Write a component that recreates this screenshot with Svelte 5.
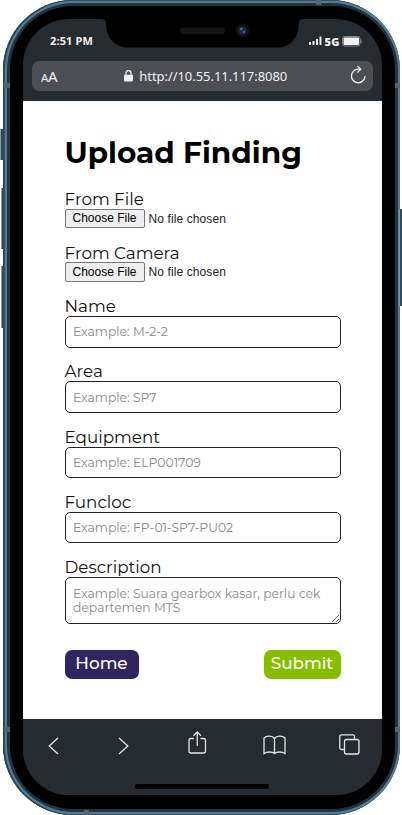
<script>
  const fields = [
    { id: 'name', label: 'Name', hint: 'Example: M-2-2' },
    { id: 'area', label: 'Area', hint: 'Example: SP7' },
    { id: 'equipment', label: 'Equipment', hint: 'Example: ELP001709' },
    { id: 'funcloc', label: 'Funcloc', hint: 'Example: FP-01-SP7-PU02' }
  ];
</script>

<div class="stage">
  <i class="key mute"></i><i class="key up"></i><i class="key down"></i><i class="key power"></i>
  <div class="phone">
    <div class="bezel">
      <div class="screen">
        <header>
          <div class="status">
            <span class="time">2:51 PM</span>
            <span class="signal">
              <svg width="14" height="10" viewBox="0 0 14 10" fill="#eee"><path d="M0 6h2v3H0zM3.5 5h2v4h-2zM7 3h2v6H7zM10.500 .5h2V9h-2z" /></svg>
              <b>5G</b>
              <svg class="battery" width="20" height="11" viewBox="0 0 20 11"><rect x=".5" y=".5" width="17.500" height="9.500" rx="2.200" fill="none" stroke="#85888b" /><rect x="1.500" y="1.500" width="15.500" height="7.500" rx="1" fill="#f2f2f2" /><path d="M19 3.500v3.500" stroke="#999" /></svg>
            </span>
          </div>
          <div class="address">
            <span class="aa"><small>A</small>A</span>
            <span class="url">
              <svg width="9" height="12" viewBox="0 0 9 12"><rect y="4.800" width="9" height="6.700" rx="1" fill="#eee" /><path d="M2 5V3a2.500 2.500 0 0 1 5 0v2" fill="none" stroke="#eee" stroke-width="1.300" /></svg>
              http://10.55.11.117:8080
            </span>
            <svg class="reload" width="17" height="19" viewBox="0 0 17 19" fill="none" stroke="#eee" stroke-width="1.300"><path d="M10.500 4.200H8.200A6.800 6.800 0 1 0 15 11M7.300 .9L10.700 4.200L7.300 7.500" /></svg>
          </div>
        </header>

        <main>
          <h1>Upload Finding</h1>
          <div class="file"><label for="file">From File</label><input id="file" type="file" /></div>
          <div class="file"><label for="camera">From Camera</label><input id="camera" type="file" /></div>
          {#each fields as field}
            <div class="field">
              <label for={field.id}>{field.label}</label>
              <input id={field.id} type="text" placeholder={field.hint} />
            </div>
          {/each}
          <div class="field description">
            <label for="description">Description</label>
            <textarea id="description" placeholder="Example: Suara gearbox kasar, perlu cek departemen MTS"></textarea>
          </div>
          <div class="actions">
            <button class="home">Home</button>
            <button class="submit">Submit</button>
          </div>
        </main>

        <footer>
          <nav>
            <svg width="11" height="18" viewBox="0 0 11 18"><path d="M10 1L1.200 9L10 17" /></svg>
            <svg width="11" height="18" viewBox="0 0 11 18"><path d="M1 1l8.800 8L1 17" /></svg>
            <svg class="share" width="19" height="24" viewBox="0 0 19 24"><path d="M6 7.500H3A2 2 0 0 0 1 9.500V20a2 2 0 0 0 2 2h12.500a2 2 0 0 0 2-2V9.500a2 2 0 0 0-2-2H12.500M9.250 15V1.200M5.500 4.700l3.750-3.700L13 4.700" /></svg>
            <svg class="book" width="23" height="20" viewBox="0 0 23 20"><path d="M11.500 3.500C9.500 .7 3.800.2 1 3v15.500c2.800-2 8.500-2 10.500 0c2-2 7.700-2 10.500 0V3C19.200.2 13.500.7 11.500 3.500v15" /></svg>
            <svg class="tabs" width="21" height="21" viewBox="0 0 21 21"><rect x="5.500" y="5.500" width="14.500" height="14.500" rx="2" /><path d="M5 15.500H2.500a1.700 1.700 0 0 1-1.700-1.700V2.500A1.700 1.700 0 0 1 2.500.8h11.300a1.700 1.700 0 0 1 1.700 1.700V5" /></svg>
          </nav>
          <div class="indicator"></div>
        </footer>
      </div>
    </div>
  </div>
  <svg class="notch" width="204" height="32" viewBox="0 0 204 32">
    <path d="M0 0V2H1Q6 2 6 7C6 21 15 30.500 28 30.500H178C190 30.500 198.700 21 198.700 7Q198.700 2 203.500 2V0Z" fill="#000" />
    <rect x="80" y="10.500" width="45" height="6.500" rx="3.200" fill="#151515" />
    <circle cx="142.500" cy="13.500" r="7" fill="#101012" /><circle cx="142.500" cy="13.500" r="4.200" fill="#1d2743" />
    <circle cx="141.300" cy="12" r="1.300" fill="#5867a0" /><circle cx="144" cy="14.800" r="1.200" fill="#4d4e9b" />
  </svg>
  <i class="seam s1"></i><i class="seam s2"></i><i class="seam s3"></i><i class="seam s4"></i><i class="seam s5"></i><i class="seam s6"></i>
</div>

<style>
  :global(body) { background: #fff; overflow: hidden; }
  * { box-sizing: border-box; }
  .stage { position: relative; width: 402px; height: 815px; padding: 0 2px 0 3px; font-family: Montserrat, Inter, "Liberation Sans", sans-serif; }
  .phone { width: 397px; height: 815px; padding: 6px 5px 6px 7px; border-radius: 70px; background: #1f3544; box-shadow: inset 1px 0 0 .7px #2b414f, inset 1px 0 0 3px #587990; }
  .bezel { height: 803px; padding: 13px 13.500px 14px 13px; border-radius: 63px; background: #000; }
  .screen { height: 776px; display: flex; flex-direction: column; border-radius: 46px; overflow: hidden; background: #262b2f; }
  header { height: 81.500px; flex: none; color: #f1f1f1; padding: 0 9px; font-family: "Noto Sans", sans-serif; }
  .status { height: 42px; display: flex; justify-content: space-between; align-items: center; padding: 2px 11px 0 18px; font-size: 11px; font-weight: 700; }
  .time { letter-spacing: .15px; margin-top: -1px; }
  .signal { display: flex; align-items: center; gap: 2px; }
  .signal b { letter-spacing: .2px; }
  .address { height: 30px; border-radius: 7px; background: #4c4e53; display: flex; align-items: center; justify-content: space-between; padding: 0 5px 0 9px; }
  .aa { width: 17px; font-size: 15px; white-space: nowrap; letter-spacing: -.3px; }
  .aa small { font-size: 11.500px; }
  .url { display: flex; align-items: center; gap: 6px; font-size: 13px; letter-spacing: -.05px; white-space: nowrap; padding-left: 3px; }
  .reload { margin-top: -4px; }
  main { height: 618.500px; flex: none; background: #fff; padding: 31px 40.500px 0 41.500px; color: #111; }
  h1 { margin: 0 0 17.500px; height: 40px; line-height: 41px; font-size: 29.500px; font-weight: 700; color: #000; white-space: nowrap; }
  label { display: block; height: 19.500px; line-height: 21px; font-size: 16.750px; }
  .file { height: 53.500px; }
  input[type="file"] { display: block; height: 20px; width: 220px; font: 12px "Liberation Sans", Arial, sans-serif; color: #222; letter-spacing: .1px; }
  input::file-selector-button { height: 19.500px; width: 80px; padding: 0; margin-right: 4px; font: 12px "Liberation Sans", Arial, sans-serif; border: 1px solid #777; border-radius: 2px; background: #efefef; }
  .field { height: 65.300px; }
  .field label { height: 20px; }
  .field input, textarea { display: block; width: 276px; border: 1px solid #222; border-radius: 5px; padding: 0 7.500px; margin: 0; background: #fff; font: 12.350px/14px Montserrat, Inter, sans-serif; }
  .field input { height: 31.500px; }
  textarea { height: 47px; padding: 9px 7.500px; resize: both; overflow: hidden; }
  ::placeholder { color: #888; opacity: 1; }
  .description { height: 92.500px; }
  .actions { display: flex; justify-content: space-between; width: 276px; }
  button { height: 29.500px; padding: 0 0 2px; border: 0; border-radius: 7px; color: #fff; font: 500 16.800px Montserrat, Inter, sans-serif; }
  .home { width: 74px; background: #30255f; }
  .submit { width: 77px; background: #87bd00; }
  footer { flex: 1; background: #262b2f; }
  nav { height: 65px; display: flex; justify-content: space-between; align-items: center; padding: 0 21.500px 12px 25px; fill: none; stroke: #e3e3e3; stroke-width: 1.300; }
  nav svg:nth-child(2) { margin-left: 3px; }
  nav .share { margin: 0 -2px 5px 3px; }
  nav .book { margin: 0 -3px 1px 3px; }
  nav .tabs { margin-bottom: 3px; }
  .indicator { width: 134px; height: 5px; margin: 0 auto; border-radius: 3px; background: #000; }
  .notch { position: absolute; left: 100px; top: 17px; }
  .key { position: absolute; width: 4px; background: #304b5b; border-left: 1px solid #8b989c; }
  .mute { left: 0; top: 129px; height: 31px; }
  .up { left: 1px; top: 188px; height: 61px; width: 3px; }
  .down { left: 1px; top: 266px; height: 62px; width: 3px; }
  .power { right: 0; top: 209px; height: 97px; width: 3px; }
  .seam { position: absolute; background: #54636d; width: 6px; height: 5px; }
  .s1 { left: 4px; top: 83px; }
  .s2 { right: 2px; top: 83px; width: 5px; }
  .s3 { left: 316px; top: 0; width: 5px; }
  .s4 { left: 4px; top: 727px; }
  .s5 { right: 2px; top: 727px; width: 5px; }
  .s6 { left: 84px; bottom: 0; width: 5px; }
</style>
